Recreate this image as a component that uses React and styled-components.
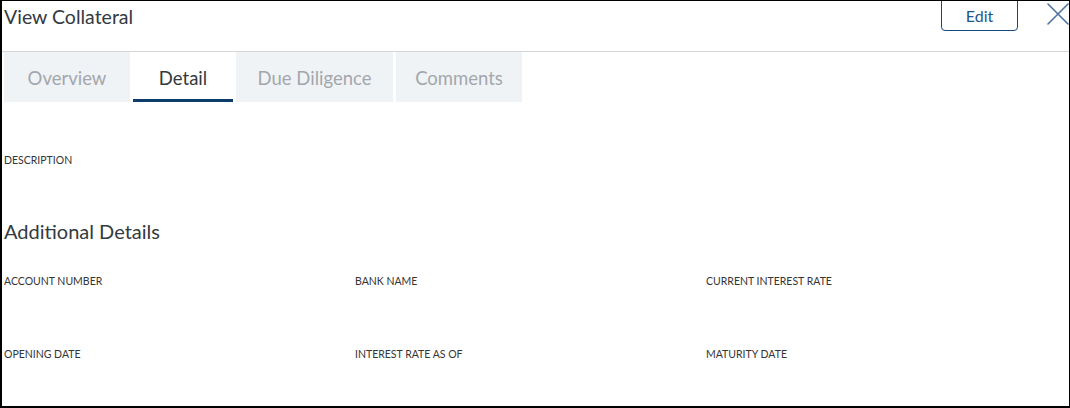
import styled, { createGlobalStyle } from 'styled-components';

const GlobalStyle = createGlobalStyle`
  html, body {
    margin: 0;
    padding: 0;
    background: #fff;
  }
  body {
    font-family: Lato, "Open Sans", sans-serif;
    color: #333;
  }
`;

const tabs = [
  { name: 'Overview', width: 126 },
  { name: 'Detail', width: 100 },
  { name: 'Due Diligence', width: 157 },
  { name: 'Comments', width: 126 }
];

const rows = [
  ['ACCOUNT NUMBER', 'BANK NAME', 'CURRENT INTEREST RATE'],
  ['OPENING DATE', 'INTEREST RATE AS OF', 'MATURITY DATE']
];

const CloseIcon = () => (
  <svg width="22" height="22" viewBox="0 0 22 22" fill="none">
    <path
      d="M1 1 L21 21 M21 1 L1 21"
      stroke="#4a72a0"
      strokeWidth="1.6"
      strokeLinecap="round"
    />
  </svg>
);

const App = () => {
  const active = 'Detail';

  return (
    <>
      <GlobalStyle />
      <Panel>
        <Header>
          <Title>View Collateral</Title>
          <EditButton type="button">Edit</EditButton>
          <CloseButton type="button" aria-label="Close">
            <CloseIcon />
          </CloseButton>
        </Header>
        <TabBar>
          {tabs.map((tab) => (
            <Tab key={tab.name} $width={tab.width} $active={tab.name === active}>
              {tab.name}
            </Tab>
          ))}
        </TabBar>
        <Content>
          <Field>
            <Label>DESCRIPTION</Label>
          </Field>
          <SectionHeading>Additional Details</SectionHeading>
          <FieldGrid>
            {rows.flat().map((label) => (
              <Field key={label}>
                <Label>{label}</Label>
                <Value />
              </Field>
            ))}
          </FieldGrid>
        </Content>
      </Panel>
    </>
  );
};

export default App;

const Panel = styled.div`
  box-sizing: border-box;
  width: 1070px;
  height: 408px;
  border: 1px solid #000;
  border-left-width: 2px;
  border-bottom-width: 2px;
  overflow: hidden;
  background: #fff;
`;

const Header = styled.header`
  display: flex;
  align-items: flex-start;
  height: 50px;
  border-bottom: 1px solid #d6d6d6;
`;

const Title = styled.h1`
  flex: 1;
  margin: 4px 0 0 2px;
  font-size: 19.5px;
  line-height: 24px;
  font-weight: 400;
  color: #333a40;
`;

const EditButton = styled.button`
  box-sizing: border-box;
  width: 77px;
  height: 35px;
  margin-top: -5px;
  padding: 4px 0 0;
  border: 1px solid #174a7c;
  border-radius: 4px;
  background: #fff;
  font-family: inherit;
  font-size: 16px;
  color: #22568a;
  cursor: pointer;
`;

const CloseButton = styled.button`
  display: flex;
  margin: 2px 0 0 29px;
  padding: 0;
  border: 0;
  background: none;
  cursor: pointer;
`;

const TabBar = styled.nav`
  display: flex;
  gap: 3px;
  height: 50px;
  padding: 0 0 0 2px;
`;

const Tab = styled.div`
  box-sizing: border-box;
  display: flex;
  align-items: center;
  justify-content: center;
  width: ${(p) => p.$width}px;
  padding: 5px 0 0;
  font-size: 18.5px;
  color: ${(p) => (p.$active ? '#333a40' : '#a3a7ac')};
  background: ${(p) => (p.$active ? '#fff' : '#f0f3f6')};
  border-bottom: 3px solid ${(p) => (p.$active ? '#0d3c6b' : 'transparent')};
`;

const Content = styled.main`
  padding: 52px 10px 0 2px;
`;

const Field = styled.div`
  display: flex;
  flex-direction: column;
`;

const Label = styled.span`
  font-size: 10.5px;
  line-height: 13px;
  color: #353535;
`;

const Value = styled.div`
  min-height: 20px;
`;

const SectionHeading = styled.h2`
  margin: 51px 0 31px;
  font-size: 20px;
  line-height: 26px;
  font-weight: 400;
  color: #333a40;
`;

const FieldGrid = styled.div`
  display: grid;
  grid-template-columns: repeat(3, 351px);
  row-gap: 40px;
`;
